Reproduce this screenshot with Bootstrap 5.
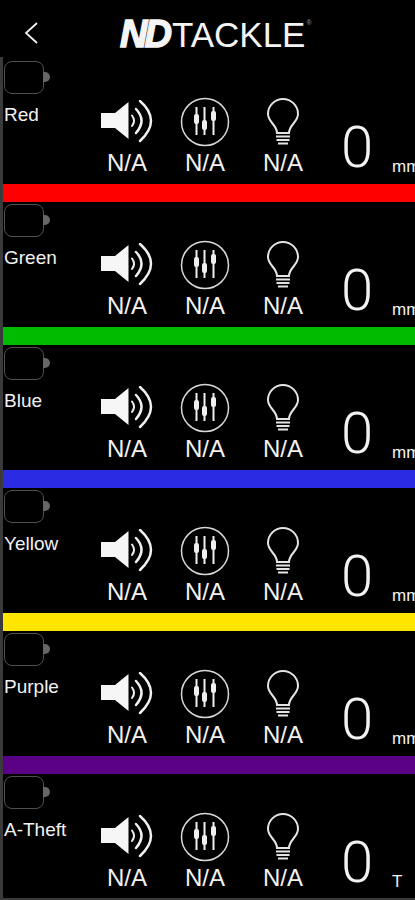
<!DOCTYPE html>
<html lang="en">
<head>
  <meta charset="UTF-8" />
  <meta name="viewport" content="width=device-width, initial-scale=1" />
  <title>ND Tackle</title>
  <link href="https://cdn.jsdelivr.net/npm/bootstrap@5.3.3/dist/css/bootstrap.min.css" rel="stylesheet" />
  <style>
    body { background: #000; color: #f2f2f2; font-family: "Liberation Sans", Arial, sans-serif; overflow: hidden; }
    .app-head { height: 57px; }
    .back-btn { width: 21px; margin: 22px 0 0 20px; padding: 0; background: none; border: 0; line-height: 0; }
    .brand { font-size: 35px; line-height: 1; margin-left: 79px; padding-top: 15px; color: #f4f4f4; white-space: nowrap; }
    .brand b { font-style: italic; font-weight: 700; font-size: 38px; letter-spacing: -3px; margin-right: 3px; -webkit-text-stroke: 1.5px #f4f4f4; }
    .brand sup { font-size: 7px; top: -3.2em; color: #999; margin-left: 1px; }
    .channels { border-left: 3px solid #3a3a3a; border-bottom: 2px solid #3a3a3a; padding-top: 2px; height: 843px; }
    .chan-row { height: 125px; width: 412px; }
    .chan-left { width: 85px; flex: none; }
    .batt { width: 40px; height: 33px; margin: 2px 0 0 1px; border: 1.5px solid #505050; border-radius: 8px; position: relative; }
    .batt::after { content: ""; position: absolute; left: 37.500px; top: 10px; width: 7px; height: 10px; background: #666; border-radius: 0 5px 5px 0; }
    .chan-name { font-size: 19px; line-height: 22px; margin: 10px 0 0 1px; white-space: nowrap; }
    .chan-cell { width: 78px; flex: none; padding-top: 38px; }
    .chan-icon { height: 50px; }
    .chan-na { font-size: 24px; line-height: 28px; margin-top: 2px; text-align: center; }
    .chan-val { width: 70px; flex: none; font-family: Roboto, "Liberation Sans", sans-serif; font-weight: 300; font-size: 58px; line-height: 58px; padding: 59px 0 0 19px; }
    .chan-unit { font-family: "Liberation Sans", Arial, sans-serif; font-size: 17px; line-height: 17px; padding-top: 99px; white-space: nowrap; flex: none; }
    .chan-bar { height: 18px; width: 412px; }
  </style>
</head>
<body>

  <svg width="0" height="0" class="d-block position-absolute">
    <symbol id="ic-speaker" viewBox="0 0 54 44">
      <path d="M1 13H15L28.500 2V39L15 28H1Z" fill="#f6f6f6"/>
      <g fill="none" stroke="#f0f0f0" stroke-linecap="round">
        <path d="M32 15.500Q36 20.500 32 26" stroke-width="2"/>
        <path d="M36 9Q47 20.500 36 33" stroke-width="2.500"/>
        <path d="M40 1Q62 20.500 40 41" stroke-width="2.500"/>
      </g>
    </symbol>
    <symbol id="ic-sliders" viewBox="0 0 50 50">
      <circle cx="25" cy="25" r="23.500" fill="none" stroke="#d8d8d8" stroke-width="1.500"/>
      <g stroke="#f0f0f0" stroke-width="2" fill="#f0f0f0">
        <path d="M16.500 10V38M24.500 10V38M33.500 10V38"/>
        <rect x="15" y="18" width="3" height="8" rx="1"/>
        <rect x="23" y="24" width="3" height="8" rx="1"/>
        <rect x="32" y="15" width="3" height="8" rx="1"/>
      </g>
    </symbol>
    <symbol id="ic-bulb" viewBox="0 0 34 48">
      <path d="M11 35C11 27 2 24 2 16A15 15 0 0 1 32 16C32 24 23 27 23 35Z" fill="none" stroke="#e4e4e4" stroke-width="2"/>
      <path d="M10 38.500H24M10.500 42H23.500M12 45.500H22" stroke="#e4e4e4" stroke-width="2.200"/>
    </symbol>
  </svg>

  <!-- Header -->
  <header class="app-head d-flex align-items-start">
    <button class="back-btn" type="button" aria-label="Back">
      <svg width="14" height="22" viewBox="0 0 14 22"><path d="M13 1L2 11L13 21" fill="none" stroke="#f0f0f0" stroke-width="1.800"/></svg>
    </button>
    <div class="brand"><b>ND</b>TACKLE<sup>®</sup></div>
  </header>

  <!-- Channels -->
  <main id="channels" class="channels"></main>

  <script>
    const channels = [
      { name: 'Red', color: '#ff0000', unit: 'mm' },
      { name: 'Green', color: '#00bb00', unit: 'mm' },
      { name: 'Blue', color: '#2a2be2', unit: 'mm' },
      { name: 'Yellow', color: '#ffe600', unit: 'mm' },
      { name: 'Purple', color: '#5a0086', unit: 'mm' },
      { name: 'A-Theft', color: null, unit: 'T' }
    ];

    function celula(icone, w, h) {
      return `
        <div class="chan-cell">
          <div class="chan-icon d-flex justify-content-center align-items-center">
            <svg width="${w}" height="${h}"><use href="#${icone}"/></svg>
          </div>
          <div class="chan-na">N/A</div>
        </div>`;
    }

    const lista = document.getElementById('channels');
    channels.forEach(c => {
      const bar = c.color ? `<div class="chan-bar" style="background:${c.color}"></div>` : '';
      lista.innerHTML += `
        <div class="chan-row d-flex">
          <div class="chan-left">
            <div class="batt"></div>
            <div class="chan-name">${c.name}</div>
          </div>
          ${celula('ic-speaker', 54, 44)}
          ${celula('ic-sliders', 50, 50)}
          ${celula('ic-bulb', 34, 48)}
          <div class="chan-val">0</div>
          <div class="chan-unit">${c.unit}</div>
        </div>
        ${bar}`;
    });
  </script>

  <script src="https://cdn.jsdelivr.net/npm/bootstrap@5.3.3/dist/js/bootstrap.bundle.min.js"></script>
</body>
</html>
